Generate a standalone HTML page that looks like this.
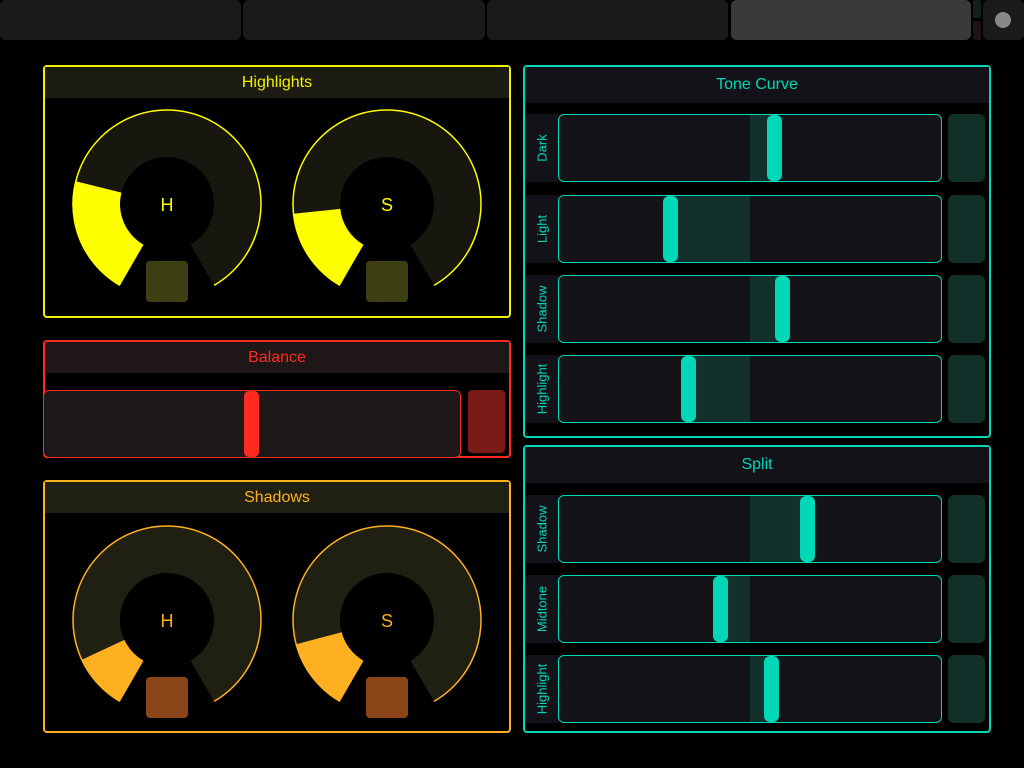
<!DOCTYPE html>
<html><head><meta charset="utf-8">
<style>
*{margin:0;padding:0;box-sizing:border-box}
body{width:1024px;height:768px;background:#000;position:relative;overflow:hidden;font-family:"Liberation Sans",sans-serif}
.a{position:absolute}
.tb{position:absolute;top:0;height:40px;background:#1a1a1a;border-radius:6px}
.panel{position:absolute;border:2px solid;border-radius:4px}
.hdr{position:absolute;left:0;right:0;top:0;text-align:center;font-size:16px}
.lab{position:absolute;left:0;width:34px;background:#121218;border-radius:4px 0 0 4px}
.lab span{position:absolute;left:50%;top:50%;transform:translate(-50%,-50%) rotate(-90deg);color:#00d8b8;font-size:13px;white-space:nowrap}
.sl{position:absolute;left:33px;width:384px;height:68px;border:1.5px solid #00d8b8;border-radius:6px;background:#131318;overflow:hidden}
.fill{position:absolute;top:0;bottom:0;background:#14302c}
.th{position:absolute;top:0;bottom:0;width:15px;background:#00d8b8;border-radius:6px}
.btn{position:absolute;left:423px;width:37px;height:68px;background:#12302a;border-radius:6px}
</style></head><body>
<div class="tb" style="left:0;width:241px"></div>
<div class="tb" style="left:243px;width:242px"></div>
<div class="tb" style="left:487px;width:241px"></div>
<div class="tb" style="left:731px;width:240px;background:#3a3a3a"></div>
<div class="tb" style="left:973px;width:8px;height:18px;background:#12201c;border-radius:2px"></div>
<div class="tb" style="left:973px;top:21px;width:8px;height:19px;background:#1e1214;border-radius:2px"></div>
<div class="tb" style="left:983px;width:41px"></div>
<div class="a" style="left:995px;top:12px;width:16px;height:16px;border-radius:50%;background:#888"></div>

<div class="panel" style="left:43px;top:65px;width:468px;height:253px;border-color:#f0f000">
 <div class="hdr" style="height:31px;line-height:31px;background:#1c1c12;color:#f0f000">Highlights</div>
</div>
<div class="panel" style="left:43px;top:340px;width:468px;height:118px;border-color:#ff2a20">
 <div class="hdr" style="height:31px;line-height:31px;background:#1f1617;color:#ff2a20">Balance</div>
 <div class="a" style="left:-2px;top:48px;width:418px;height:68px;border:1.5px solid #ff2a20;border-radius:6px;background:#1e1819;overflow:hidden">
  <div class="a" style="left:200px;top:0;bottom:0;width:15px;background:#ff2a20;border-radius:5px"></div>
 </div>
 <div class="a" style="left:423px;top:48px;width:37px;height:63px;background:#7a1a16;border-radius:4px"></div>
</div>
<div class="panel" style="left:43px;top:480px;width:468px;height:253px;border-color:#ffb020">
 <div class="hdr" style="height:31px;line-height:31px;background:#1f1f12;color:#ffb020">Shadows</div>
</div>

<svg class="a" style="left:0;top:0" width="1024" height="768" id="k"></svg>

<div class="panel" style="left:523px;top:65px;width:468px;height:373px;border-color:#00d8b8">
 <div class="hdr" style="height:36px;line-height:36px;background:#121218;color:#00d8b8">Tone Curve</div>
 <div class="lab" style="top:47px;height:68px"><span>Dark</span></div>
 <div class="sl" style="top:47px"><div class="fill" style="left:191px;width:20px"></div><div class="th" style="left:208px"></div></div>
 <div class="btn" style="top:47px"></div>
 <div class="lab" style="top:128px;height:68px"><span>Light</span></div>
 <div class="sl" style="top:128px"><div class="fill" style="left:112px;width:79px"></div><div class="th" style="left:104px"></div></div>
 <div class="btn" style="top:128px"></div>
 <div class="lab" style="top:208px;height:68px"><span>Shadow</span></div>
 <div class="sl" style="top:208px"><div class="fill" style="left:191px;width:28px"></div><div class="th" style="left:216px"></div></div>
 <div class="btn" style="top:208px"></div>
 <div class="lab" style="top:288px;height:68px"><span>Highlight</span></div>
 <div class="sl" style="top:288px"><div class="fill" style="left:130px;width:61px"></div><div class="th" style="left:122px"></div></div>
 <div class="btn" style="top:288px"></div>
</div>
<div class="panel" style="left:523px;top:445px;width:468px;height:288px;border-color:#00d8b8">
 <div class="hdr" style="height:36px;line-height:36px;background:#121218;color:#00d8b8">Split</div>
 <div class="lab" style="top:48px;height:68px"><span>Shadow</span></div>
 <div class="sl" style="top:48px"><div class="fill" style="left:191px;width:52px"></div><div class="th" style="left:241px"></div></div>
 <div class="btn" style="top:48px"></div>
 <div class="lab" style="top:128px;height:68px"><span>Midtone</span></div>
 <div class="sl" style="top:128px"><div class="fill" style="left:160px;width:31px"></div><div class="th" style="left:154px"></div></div>
 <div class="btn" style="top:128px"></div>
 <div class="lab" style="top:208px;height:68px"><span>Highlight</span></div>
 <div class="sl" style="top:208px"><div class="fill" style="left:191px;width:16px"></div><div class="th" style="left:205px"></div></div>
 <div class="btn" style="top:208px"></div>
</div>

<script>
function p(cx,cy,r,a){a=a*Math.PI/180;return (cx+r*Math.cos(a)).toFixed(1)+' '+(cy+r*Math.sin(a)).toFixed(1)}
function sec(cx,cy,R,r,a1,a2){var l=(a2-a1)>180?1:0;
 return 'M'+p(cx,cy,R,a1)+' A'+R+' '+R+' 0 '+l+' 1 '+p(cx,cy,R,a2)+' L'+p(cx,cy,r,a2)+' A'+r+' '+r+' 0 '+l+' 0 '+p(cx,cy,r,a1)+'Z'}
function arc(cx,cy,R,a1,a2){var l=(a2-a1)>180?1:0;return 'M'+p(cx,cy,R,a1)+' A'+R+' '+R+' 0 '+l+' 1 '+p(cx,cy,R,a2)}
var s='';
function knob(cx,cy,v,col,trk,sq,t){
 s+='<path d="'+sec(cx,cy,94,47,120,420)+'" fill="'+trk+'"/>';
 s+='<path d="'+sec(cx,cy,94,47,120,v)+'" fill="'+col+'"/>';
 s+='<path d="'+arc(cx,cy,94,120,420)+'" fill="none" stroke="'+col+'" stroke-width="1.5"/>';
 s+='<rect x="'+(cx-21)+'" y="'+(cy+57)+'" width="42" height="41" rx="4" fill="'+sq+'"/>';
 s+='<text x="'+cx+'" y="'+(cy+7)+'" fill="'+col+'" font-family="Liberation Sans" font-size="18" text-anchor="middle">'+t+'</text>';
}
knob(167,204,194,'#ffff00','#17170f','#3f3f14','H');
knob(387,204,174,'#ffff00','#17170f','#3f3f14','S');
knob(167,620,155,'#ffb020','#1f1f12','#8a4518','H');
knob(387,620,165,'#ffb020','#1f1f12','#8a4518','S');
document.getElementById('k').innerHTML=s;
</script>
</body></html>
